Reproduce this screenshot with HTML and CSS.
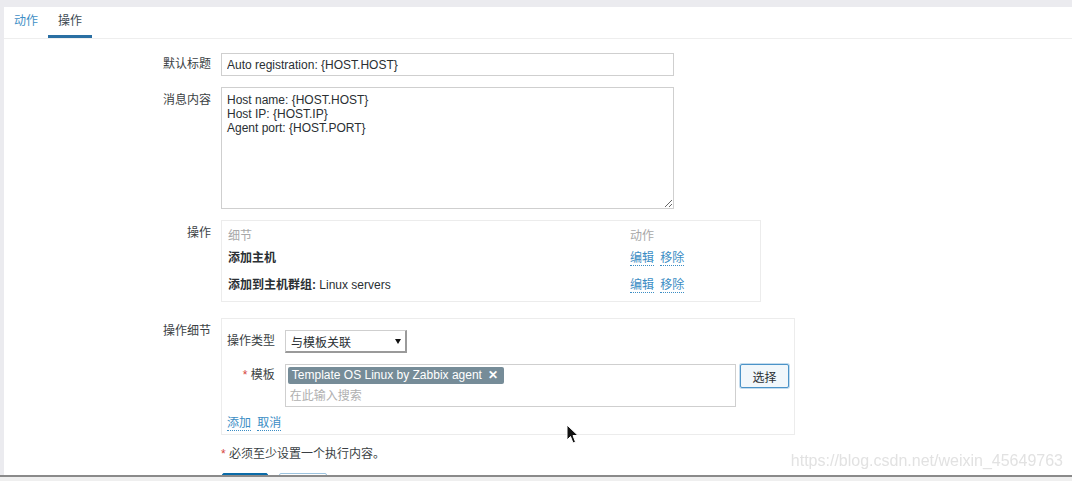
FILE: index.html
```html
<!DOCTYPE html>
<html lang="zh-CN">
<head>
  <meta charset="UTF-8">
  <title>自动注册动作 - 操作</title>
  <meta name="viewport" content="width=device-width, initial-scale=1.0">
  <link rel="stylesheet" href="styles.css">
</head>
<body>

  <div class="top-strip"></div>

  <div class="panel">
    <!-- Tabs -->
    <ul class="tabs">
      <li><a href="#">动作</a></li>
      <li class="active">操作</li>
    </ul>

    <form class="form">
      <div class="row">
        <label class="lbl">默认标题</label>
        <input type="text" class="text-in" value="Auto registration: {HOST.HOST}">
      </div>

      <div class="row">
        <label class="lbl lbl-top">消息内容</label>
        <textarea class="text-area">Host name: {HOST.HOST}
Host IP: {HOST.IP}
Agent port: {HOST.PORT}</textarea>
      </div>

      <!-- Operations list -->
      <div class="row">
        <label class="lbl lbl-box">操作</label>
        <div class="ops-box">
          <div class="ops-head">
            <span>细节</span>
            <span>动作</span>
          </div>
          <div class="ops-row">
            <span><b>添加主机</b></span>
            <span><a href="#" class="link">编辑</a> <a href="#" class="link">移除</a></span>
          </div>
          <div class="ops-row">
            <span><b>添加到主机群组:</b> Linux servers</span>
            <span><a href="#" class="link">编辑</a> <a href="#" class="link">移除</a></span>
          </div>
        </div>
      </div>

      <!-- Operation details -->
      <div class="row">
        <label class="lbl lbl-box">操作细节</label>
        <div class="detail-box">
          <div class="sub-row">
            <label class="sub-lbl">操作类型</label>
            <div class="select">
              <span>与模板关联</span>
              <span class="arrow"></span>
            </div>
          </div>
          <div class="sub-row">
            <label class="sub-lbl"><span class="req">*</span> 模板</label>
            <div class="multi">
              <span class="chip">Template OS Linux by Zabbix agent <span class="chip-x">✕</span></span>
              <input type="text" class="multi-in" placeholder="在此输入搜索">
            </div>
            <button type="button" class="btn-select">选择</button>
          </div>
          <div class="sub-links">
            <a href="#" class="link">添加</a> <a href="#" class="link">取消</a>
          </div>
        </div>
      </div>

      <p class="note"><span class="req">*</span> 必须至少设置一个执行内容。</p>

      <!-- submit buttons, mostly hidden below the bottom bar -->
      <div class="buttons">
        <button type="button" class="btn-main" aria-label="更新"></button>
        <button type="button" class="btn-alt" aria-label="克隆"></button>
      </div>
    </form>
  </div>

  <div class="watermark">https://blog.csdn.net/weixin_45649763</div>

  <svg class="cursor" width="14" height="21" viewBox="0 0 14 21">
    <path d="M1 1 L1 16 L4.5 12.5 L7 19 L9.5 18 L7 11.5 L12 11.5 Z" fill="#111" stroke="#fff" stroke-width="1"/>
  </svg>

  <div class="bottom-bar"></div>

</body>
</html>
```

FILE: styles.css
```css
html, body {
  margin: 0;
  height: 100%;
  overflow: hidden;
}

body {
  font-family: "Liberation Sans", Arial, "Noto Sans CJK SC", sans-serif;
  font-size: 12px;
  color: #2a2f33;
  background: #ebebef;
}

.top-strip {
  height: 7px;
}

.panel {
  margin-left: 4px;
  background: #fff;
  min-height: 480px;
}

/* tabs */
.tabs {
  list-style: none;
  margin: 0;
  padding: 0;
  display: flex;
  border-bottom: 1px solid #eeeeee;
}

.tabs li {
  box-sizing: border-box;
  height: 31px;
  line-height: 29px;
  padding: 0 10px;
  color: #3b4a52;
  border-bottom: 3px solid transparent;
}

.tabs li a {
  color: #3f8fc6;
  text-decoration: none;
}

.tabs li.active {
  border-bottom-color: #2a6fa3;
}

/* form */
.form {
  padding-top: 14px;
}

.row {
  display: flex;
  align-items: flex-start;
  margin-bottom: 11px;
}

.row:nth-child(3) {
  margin-bottom: 16px;
}

.lbl {
  width: 207px;
  margin-right: 10px;
  text-align: right;
  line-height: 23px;
  color: #3a3f44;
}

.lbl-top {
  line-height: 14px;
  padding-top: 6px;
}

.lbl-box {
  line-height: 14px;
  padding-top: 6px;
}

.text-in {
  box-sizing: border-box;
  width: 453px;
  height: 23px;
  margin: 0;
  padding: 0 5px;
  border: 1px solid #cfcfcf;
  font: inherit;
  color: #2a2f33;
}

.text-area {
  box-sizing: border-box;
  width: 453px;
  height: 122px;
  margin: 0;
  padding: 5px 5px;
  border: 1px solid #cfcfcf;
  font: inherit;
  line-height: 14px;
  color: #2a2f33;
  resize: vertical;
}

/* operations list */
.ops-box {
  box-sizing: border-box;
  width: 540px;
  height: 82px;
  padding: 8px 6px 0 6px;
  border: 1px solid #ececec;
}

.ops-head, .ops-row {
  display: grid;
  grid-template-columns: 402px 1fr;
}

.ops-head {
  line-height: 14px;
  color: #a8a8a8;
}

.ops-row {
  line-height: 22px;
  margin-top: 4px;
}

.ops-row + .ops-row {
  margin-top: 5px;
}

.ops-row b {
  color: #2a2f33;
}

.link {
  color: #3b8dc4;
  text-decoration: none;
  border-bottom: 1px dotted #3b8dc4;
  margin-right: 3px;
}

/* operation details */
.detail-box {
  box-sizing: border-box;
  width: 574px;
  height: 117px;
  padding: 11px 5px 0 5px;
  border: 1px solid #ececec;
}

.sub-row {
  display: flex;
  align-items: flex-start;
  margin-bottom: 11px;
}

.sub-lbl {
  width: 48px;
  margin-right: 10px;
  text-align: right;
  line-height: 23px;
  color: #3a3f44;
}

.req {
  color: #d64541;
}

.select {
  box-sizing: border-box;
  width: 122px;
  height: 23px;
  display: flex;
  align-items: center;
  justify-content: space-between;
  padding: 0 3px 0 5px;
  border: 1px solid #cfcfcf;
  border-right: 2px solid #9a9a9a;
  border-bottom: 2px solid #9a9a9a;
}

.arrow {
  width: 0;
  height: 0;
  border-left: 3px solid transparent;
  border-right: 3px solid transparent;
  border-top: 5px solid #111;
  margin-right: 1px;
}

.multi {
  box-sizing: border-box;
  width: 453px;
  height: 43px;
  padding: 2px 2px;
  border: 1px solid #cfcfcf;
}

.chip {
  display: inline-block;
  height: 17px;
  line-height: 17px;
  padding: 0 6px 0 4px;
  background: #768c98;
  color: #fff;
  border-radius: 2px;
}

.chip-x {
  font-weight: bold;
  margin-left: 3px;
}

.multi-in {
  display: block;
  width: 300px;
  margin: 5px 0 0 2px;
  padding: 0;
  border: none;
  outline: none;
  font: inherit;
}

.multi-in::placeholder {
  color: #b0b0b0;
}

.btn-select {
  box-sizing: border-box;
  width: 49px;
  height: 24px;
  margin-left: 4px;
  background: #f1f7fb;
  border: 1px solid #4b93c8;
  box-shadow: 0 0 0 1px #c4dcee;
  border-radius: 2px;
  font: inherit;
  color: #2a2f33;
}

.sub-links {
  line-height: 14px;
  margin-top: -2px;
}

.note {
  margin: 12px 0 0 217px;
  line-height: 14px;
  color: #3a3f44;
}

.buttons {
  margin: 12px 0 0 218px;
  display: flex;
  gap: 11px;
}

.btn-main, .btn-alt {
  height: 24px;
  border-radius: 2px;
  font: inherit;
}

.btn-main {
  width: 46px;
  background: #0b6ba8;
  border: 1px solid #0b6ba8;
}

.btn-alt {
  width: 48px;
  background: #fff;
  border: 1px solid #9cc3df;
}

/* overlays */
.watermark {
  position: fixed;
  right: 9px;
  top: 452px;
  font-size: 16px;
  color: #e2e2e2;
}

.cursor {
  position: fixed;
  left: 566px;
  top: 424px;
}

.bottom-bar {
  position: fixed;
  left: 0;
  right: 0;
  top: 475px;
  bottom: 0;
  background: #efefef;
  border-top: 2px solid #8a8a8a;
}
```
